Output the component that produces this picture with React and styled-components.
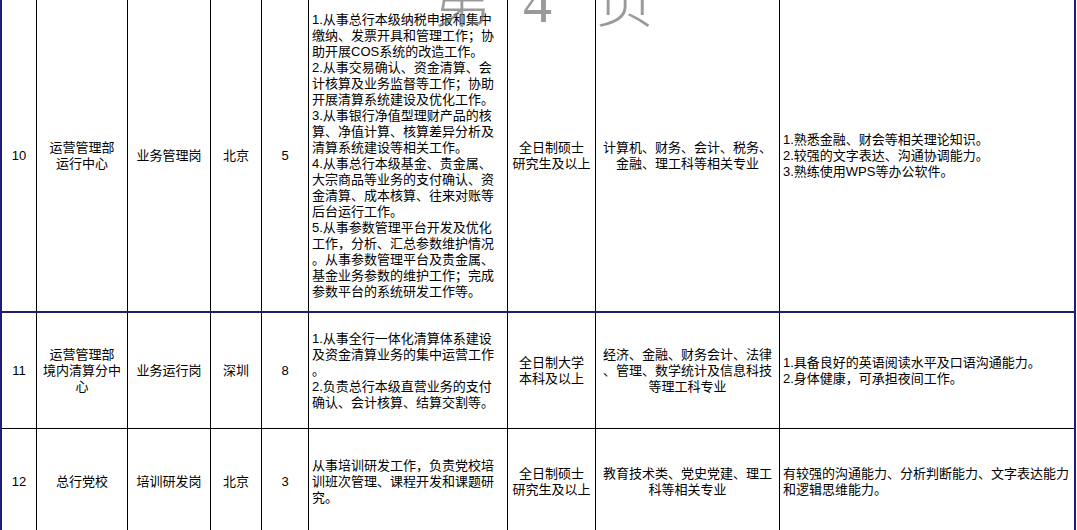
import React from 'react';
import styled, { createGlobalStyle } from 'styled-components';

const Global = createGlobalStyle`
  html, body { margin: 0; padding: 0; background: #fff; overflow: hidden; }
`;

const Page = styled.div`
  position: relative;
  width: 1077px;
  height: 530px;
  overflow: hidden;
  background: #fff;
  font-family: "Liberation Sans", "Noto Sans CJK SC", sans-serif;
  font-size: 13px;
  line-height: 16px;
  color: #000;
`;

const Table = styled.div`
  width: 1076px;
  box-sizing: border-box;
  border-left: 2px solid #1e1e78;
  border-right: 2px solid #1e1e78;
  display: flex;
  flex-direction: column;
`;

const Row = styled.div`
  flex: none;
  display: grid;
  grid-template-columns: 35px 91px 83px 51px 47px 199px 88px 184px 294px;
  height: ${(p) => p.$h}px;
  box-sizing: border-box;
  border-bottom: ${(p) =>
    p.$sep === 'dashed' ? '2px solid #1f1f6e' : p.$sep === 'solid' ? '1px solid #000' : 'none'};
`;

const Cell = styled.div`
  box-sizing: border-box;
  border-right: 1px solid #000;
  &:last-child { border-right: none; }
  display: flex;
  flex-direction: column;
  justify-content: center;
  align-items: ${(p) => (p.$left ? 'flex-start' : 'center')};
  text-align: ${(p) => (p.$left ? 'left' : 'center')};
  padding: 0 ${(p) => (p.$left ? '3px' : '2px')};
  white-space: nowrap;
  overflow: hidden;
`;

const Line = styled.span`
  display: block;
`;

const Watermark = styled.div`
  position: absolute;
  top: -26px;
  left: 433px;
  display: flex;
  align-items: baseline;
  font-family: "Liberation Serif", "Noto Sans CJK SC", serif;
  font-size: 58px;
  line-height: 58px;
  font-weight: 300;
  color: rgba(120, 120, 120, 0.75);
  pointer-events: none;
`;

const Glyph = styled.span`
  margin-left: ${(p) => p.$ml || 0}px;
`;

const rows = [
  {
    h: 313,
    sep: 'dashed',
    cells: [
      ['10'],
      ['运营管理部', '运行中心'],
      ['业务管理岗'],
      ['北京'],
      ['5'],
      [
        '1.从事总行本级纳税申报和集中',
        '缴纳、发票开具和管理工作；协',
        '助开展COS系统的改造工作。',
        '2.从事交易确认、资金清算、会',
        '计核算及业务监督等工作；协助',
        '开展清算系统建设及优化工作。',
        '3.从事银行净值型理财产品的核',
        '算、净值计算、核算差异分析及',
        '清算系统建设等相关工作。',
        '4.从事总行本级基金、贵金属、',
        '大宗商品等业务的支付确认、资',
        '金清算、成本核算、往来对账等',
        '后台运行工作。',
        '5.从事参数管理平台开发及优化',
        '工作，分析、汇总参数维护情况',
        '。从事参数管理平台及贵金属、',
        '基金业务参数的维护工作；完成',
        '参数平台的系统研发工作等。',
      ],
      ['全日制硕士', '研究生及以上'],
      ['计算机、财务、会计、税务、', '金融、理工科等相关专业'],
      ['1.熟悉金融、财会等相关理论知识。', '2.较强的文字表达、沟通协调能力。', '3.熟练使用WPS等办公软件。'],
    ],
  },
  {
    h: 116,
    sep: 'solid',
    cells: [
      ['11'],
      ['运营管理部', '境内清算分中', '心'],
      ['业务运行岗'],
      ['深圳'],
      ['8'],
      [
        '1.从事全行一体化清算体系建设',
        '及资金清算业务的集中运营工作',
        '。',
        '2.负责总行本级直营业务的支付',
        '确认、会计核算、结算交割等。',
      ],
      ['全日制大学', '本科及以上'],
      ['经济、金融、财务会计、法律', '、管理、数学统计及信息科技', '等理工科专业'],
      ['1.具备良好的英语阅读水平及口语沟通能力。', '2.身体健康，可承担夜间工作。'],
    ],
  },
  {
    h: 106,
    sep: 'none',
    cells: [
      ['12'],
      ['总行党校'],
      ['培训研发岗'],
      ['北京'],
      ['3'],
      ['从事培训研发工作，负责党校培', '训班次管理、课程开发和课题研', '究。'],
      ['全日制硕士', '研究生及以上'],
      ['教育技术类、党史党建、理工', '科等相关专业'],
      ['有较强的沟通能力、分析判断能力、文字表达能力', '和逻辑思维能力。'],
    ],
  },
];

const leftCols = new Set([5, 8]);

export default function App() {
  return (
    <Page>
      <Global />
      <Table>
        {rows.map((r, ri) => (
          <Row key={ri} $h={r.h} $sep={r.sep}>
            {r.cells.map((lines, ci) => (
              <Cell key={ci} $left={leftCols.has(ci)}>
                {lines.map((t, li) => (
                  <Line key={li}>{t}</Line>
                ))}
              </Cell>
            ))}
          </Row>
        ))}
      </Table>
      <Watermark>
        <Glyph>第</Glyph>
        <Glyph $ml={32}>4</Glyph>
        <Glyph $ml={44}>页</Glyph>
      </Watermark>
    </Page>
  );
}
